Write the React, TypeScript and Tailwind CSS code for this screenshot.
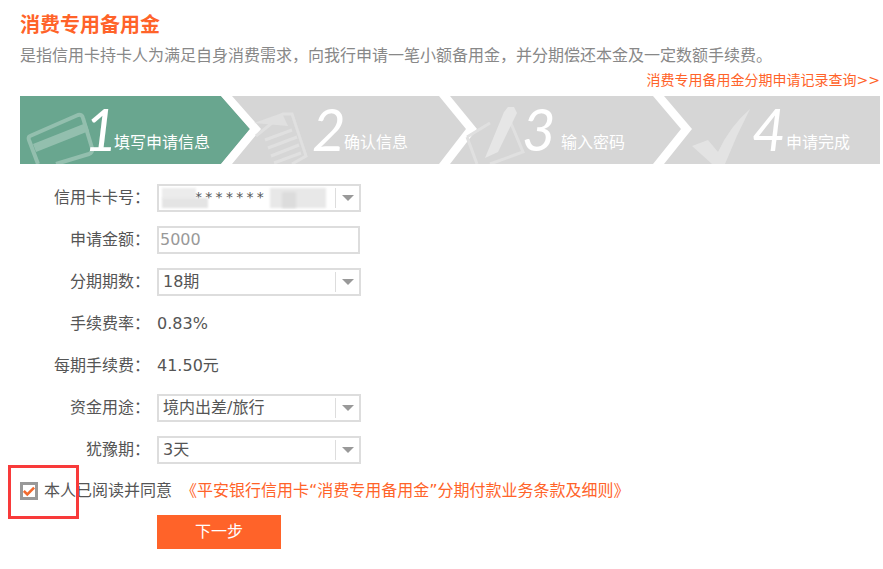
const font = { fontFamily: '"DejaVu Sans", "Noto Sans CJK SC", sans-serif' };

const steps = [
  { num: "1", label: "填写申请信息", numClass: "w-[94px] pl-[64px]", gap: "ml-0", width: "w-[220px]" },
  { num: "2", label: "确认信息", numClass: "ml-[72px] w-[32px]", gap: "ml-0", width: "w-[214px]" },
  { num: "3", label: "输入密码", numClass: "ml-[68px] w-[32px]", gap: "ml-[7px]", width: "w-[214px]" },
  { num: "4", label: "申请完成", numClass: "ml-[84px] w-[32px]", gap: "ml-[2px]", width: "flex-1" },
];

const StepArt = () => (
  <svg className="absolute inset-0" width="860" height="68" viewBox="0 0 860 68">
    <rect width="860" height="68" fill="#d6d6d6" />
    <polygon points="0,0 201,0 230,33 201,68 0,68" fill="#69a68f" />
    <polygon points="201,0 212,0 241,33 212,68 201,68 230,33" fill="#ffffff" />
    <polygon points="419,0 430,0 457,33 430,68 419,68 446,33" fill="#ffffff" />
    <polygon points="633,0 644,0 672,33 644,68 633,68 661,33" fill="#ffffff" />
    {/* card */}
    <g fill="none" stroke="#93bfae" strokeWidth="4" strokeLinejoin="round">
      <path d="M10 40 L58 19 Q62 18 63 22 L72 52 Q73 56 69 58 L36 68 M18 68 L9 44 Q8 41 10 40" />
    </g>
    <polygon points="13,48 66,27 69,35 16,56" fill="#93bfae" />
    {/* document */}
    <g fill="none" stroke="#e0e0e0" strokeWidth="3">
      <path d="M236 40 L263 18 L272 18 L286 60 L272 68" />
      <path d="M245 44 L272 34 M248 52 L277 41 M251 60 L279 49 M254 67 L281 57" />
    </g>
    <polygon points="234,27 262,17 268,30" fill="#e0e0e0" />
    {/* pencil */}
    <path d="M447 41 L470 27 M490 25 L503 56 L470 68 M447 41 L457 68" fill="none" stroke="#e0e0e0" strokeWidth="3" />
    <polygon points="465,62 484,16 488,11 494,11 497,17 478,56" fill="#e6e6e6" />
    {/* check */}
    <path d="M672 50 L688 44 L698 56 Q710 30 730 13 Q716 40 705 68 L692 68 Z" fill="#e3e3e3" />
  </svg>
);

const Row = ({ label, children }: { label: string; children: React.ReactNode }) => (
  <div className="flex h-[42px] items-center">
    <div className="w-[130px] text-right text-[16px] text-[#555]">{label}：</div>
    <div className="ml-[-2px] flex items-center text-[16px] text-[#555]">{children}</div>
  </div>
);

const SelectBox = ({ children }: { children: React.ReactNode }) => (
  <div className="relative ml-[9px] flex h-[28px] w-[204px] items-center border-2 border-[#dddddd] bg-white">
    <div className="flex-1 pl-[4px] text-[16px] text-[#555]">{children}</div>
    <div className="flex h-[20px] w-[24px] items-center justify-center border-l border-[#dddddd]">
      <div className="h-0 w-0 border-x-[6px] border-t-[6px] border-x-transparent border-t-[#999]" />
    </div>
  </div>
);

export default function App() {
  return (
    <div className="relative h-[569px] w-[883px] overflow-hidden bg-white pl-5 pr-[3px] [text-spacing-trim:space-all]" style={font}>
      <h1 className="pt-[11px] text-[20px] font-bold leading-[28px] text-[#ff6329]">消费专用备用金</h1>
      <p className="mt-[5px] text-[16px] leading-[24px] text-[#888]">
        是指信用卡持卡人为满足自身消费需求，向我行申请一笔小额备用金，并分期偿还本金及一定数额手续费。
      </p>
      <div className="mt-[1px] text-right text-[14px] leading-[22px] text-[#ff6329]">
        消费专用备用金分期申请记录查询&gt;&gt;
      </div>

      <div className="relative mt-[5px] flex h-[68px] items-end">
        <StepArt />
        {steps.map((s) => (
          <div key={s.num} className={`relative flex items-end text-white ${s.width}`}>
            <span
              className={`${s.numClass} mb-[2px] text-[58px] font-normal italic leading-[66px]`}
              style={{ fontFamily: '"Lato", "Open Sans", sans-serif' }}
            >
              {s.num}
            </span>
            <span className={`${s.gap} pb-[10px] text-[16px] leading-[22px]`}>{s.label}</span>
          </div>
        ))}
      </div>

      <div className="mt-[13px]">
        <Row label="信用卡卡号">
          <div className="relative">
            <SelectBox>
              <span className="inline-block pb-[6px] pl-[32px] text-[14px] leading-[16px] tracking-[3.3px]">*******</span>
            </SelectBox>
            {/* masked card number */}
            <div className="absolute left-[14px] top-[4px] h-[11px] w-[34px] bg-[#ececec] blur-[1px]" />
            <div className="absolute left-[14px] top-[14px] h-[10px] w-[46px] bg-[#e4e4e4] blur-[1px]" />
            <div className="absolute left-[122px] top-[4px] h-[20px] w-[56px] bg-[#e8e8e8] blur-[1px]" />
            <div className="absolute left-[134px] top-[8px] h-[16px] w-[14px] bg-[#dcdcdc] blur-[1px]" />
          </div>
        </Row>
        <Row label="申请金额">
          <div className="ml-[9px] flex h-[28px] w-[203px] items-center border-2 border-[#dddddd] pl-[1px] text-[16px] text-[#999]">
            5000
          </div>
        </Row>
        <Row label="分期期数">
          <SelectBox>18期</SelectBox>
        </Row>
        <Row label="手续费率">
          <span className="ml-[9px]">0.83%</span>
        </Row>
        <Row label="每期手续费">
          <span className="ml-[9px]">41.50元</span>
        </Row>
        <Row label="资金用途">
          <SelectBox>境内出差/旅行</SelectBox>
        </Row>
        <Row label="犹豫期">
          <SelectBox>3天</SelectBox>
        </Row>
      </div>

      <div className="mt-[8px] flex h-[24px] items-center text-[16px] text-[#555]">
        <div className="flex h-[18px] w-[18px] items-center justify-center border-[3px] border-[#999] bg-white">
          <svg width="14" height="12" viewBox="0 0 14 12">
            <path d="M1 6 L5 10 L13 2" fill="none" stroke="#f26a2e" strokeWidth="3" />
          </svg>
        </div>
        <span className="ml-[6px]">本人已阅读并同意</span>
        <span className="ml-[9px] text-[#ff6329]">《平安银行信用卡“消费专用备用金”分期付款业务条款及细则》</span>
      </div>

      <button className="ml-[137px] mt-[12px] block h-[34px] w-[124px] bg-[#ff6329] text-[16px] text-white">下一步</button>

      <div className="absolute left-[8px] top-[465px] h-[54px] w-[71px] border-[3px] border-[#f83a3a]" />
    </div>
  );
}
